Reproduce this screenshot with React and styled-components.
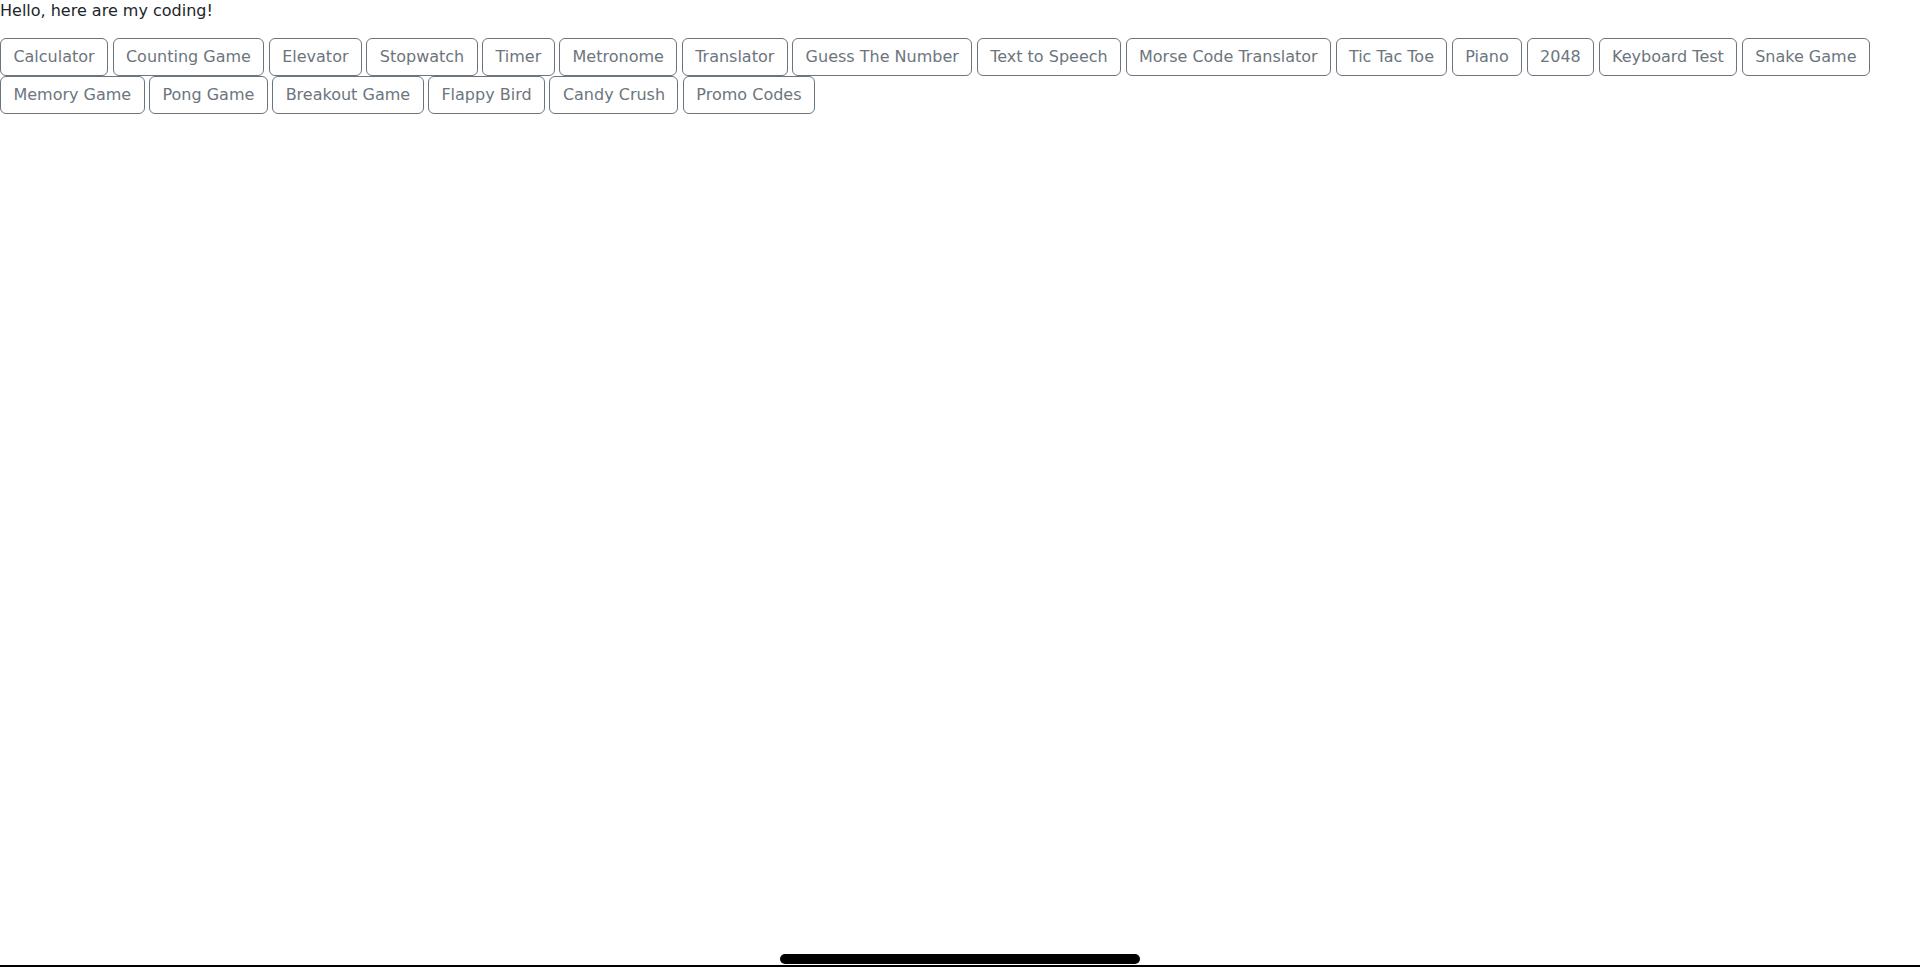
import React from 'react'
import styled, { createGlobalStyle } from 'styled-components'

const GlobalStyle = createGlobalStyle`
  html, body {
    margin: 0;
    padding: 0;
    background: #fff;
  }

  body {
    font-family: 'DejaVu Sans', 'Liberation Sans', sans-serif;
    font-size: 16px;
    color: #212529;
  }
`

const Page = styled.div`
  min-height: 100vh;
`

const Greeting = styled.div`
  line-height: 22px;
  margin-bottom: 16px;
`

const ProjectList = styled.div`
  display: flex;
  flex-wrap: wrap;
  column-gap: 4.5px;
  row-gap: 0;
`

const ProjectButton = styled.button`
  font-family: 'DejaVu Sans', 'Liberation Sans', sans-serif;
  font-size: 16px;
  line-height: 24px;
  color: #6c757d;
  background: transparent;
  border: 1px solid #6c757d;
  border-radius: 6px;
  padding: 6px 12.4px;
  cursor: pointer;
  white-space: nowrap;

  &:hover {
    background: #6c757d;
    color: #fff;
  }
`

const HomeIndicator = styled.div`
  position: fixed;
  left: 50%;
  bottom: 3px;
  transform: translateX(-50%);
  width: 360px;
  height: 10px;
  border-radius: 5px;
  background: #000;
`

const BottomEdge = styled.div`
  position: fixed;
  left: 0;
  right: 0;
  bottom: 0;
  height: 2px;
  background: #000;
`

const projects = [
  'Calculator',
  'Counting Game',
  'Elevator',
  'Stopwatch',
  'Timer',
  'Metronome',
  'Translator',
  'Guess The Number',
  'Text to Speech',
  'Morse Code Translator',
  'Tic Tac Toe',
  'Piano',
  '2048',
  'Keyboard Test',
  'Snake Game',
  'Memory Game',
  'Pong Game',
  'Breakout Game',
  'Flappy Bird',
  'Candy Crush',
  'Promo Codes',
]

export default function App() {
  return (
    <Page>
      <GlobalStyle />
      <Greeting>Hello, here are my coding!</Greeting>
      <ProjectList>
        {projects.map((name) => (
          <ProjectButton key={name}>{name}</ProjectButton>
        ))}
      </ProjectList>
      <HomeIndicator />
      <BottomEdge />
    </Page>
  )
}
